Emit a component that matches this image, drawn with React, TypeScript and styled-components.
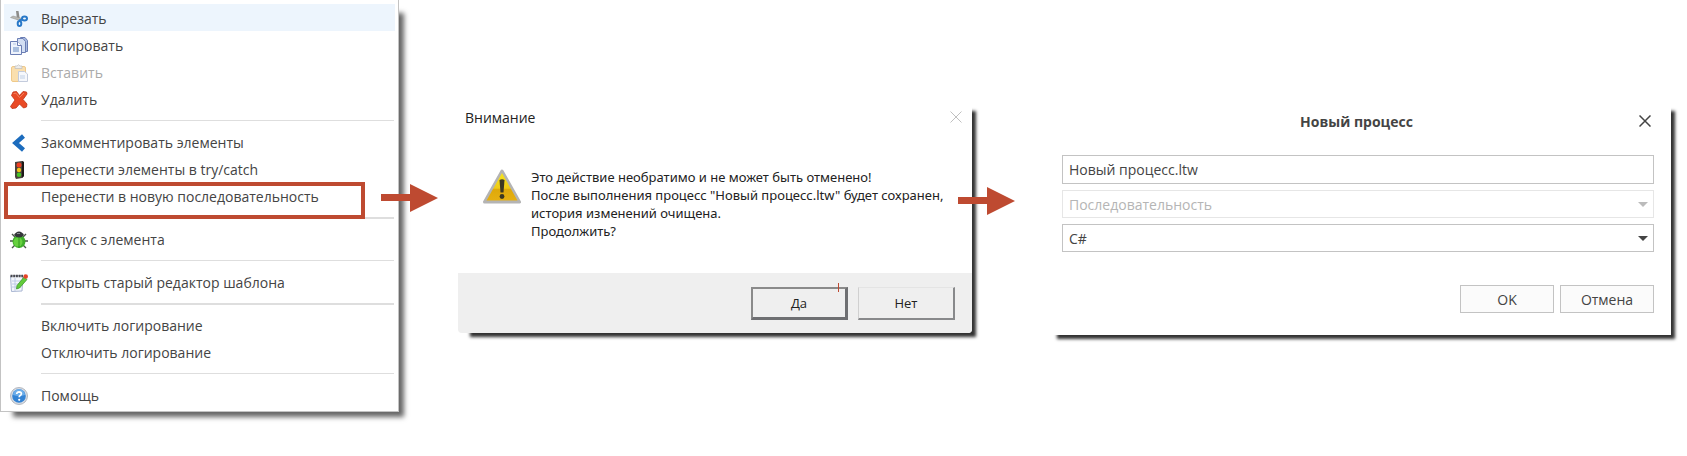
import React, { useState } from "react";
import styled, { createGlobalStyle, css } from "styled-components";

const RED = "#be4a31";

const GlobalStyle = createGlobalStyle`
  *, *::before, *::after { box-sizing: border-box; }
  body {
    margin: 0;
    background: #fff;
    color: #444;
    font-family: "Open Sans", "Noto Sans", sans-serif;
    font-size: 14px;
  }
  button, input, select { font: inherit; color: inherit; }
`;

const Page = styled.main`
  display: grid;
  grid-template-columns: minmax(0, 399fr) 59px minmax(0, 514fr) 73px minmax(0, 626fr);
  align-items: start;
  min-height: 100vh;
  padding: 0 16px 16px 0;
`;

/* ---------- context menu ---------- */

const Menu = styled.div`
  grid-column: 1;
  padding: 4px 3px 3px;
  background: #fff;
  border: solid #c3c3c3;
  border-width: 0 1px 1px;
  box-shadow: 9px 9px 5px -4px #666;
`;

const MenuRow = styled.div`
  position: relative;
`;

const MenuItem = styled.button<{ $active?: boolean }>`
  display: grid;
  grid-template-columns: 18px 1fr;
  align-items: center;
  column-gap: 13px;
  width: 100%;
  height: 27px;
  padding: 2px 6px 0;
  border: 0;
  background: ${(p) => (p.$active ? "#edf5fd" : "transparent")};
  text-align: left;
  white-space: nowrap;
  &:disabled { color: #aaa; }
`;

const ItemText = styled.span`
  grid-column: 2;
`;

const Separator = styled.hr<{ $thick?: boolean }>`
  height: ${(p) => (p.$thick ? "2px" : "1px")};
  margin: 8px 1px ${(p) => (p.$thick ? "6px" : "7px")} 37px;
  border: 0;
  background: #dedede;
`;

const Marker = styled.span`
  position: absolute;
  left: 0;
  right: 30px;
  top: 0;
  height: 37px;
  border: 4px solid ${RED};
  pointer-events: none;
`;

const ArrowSvg = styled.svg<{ $top: number; $right: number }>`
  position: absolute;
  z-index: 2;
  top: ${(p) => p.$top}px;
  right: ${(p) => p.$right}px;
  width: 57px;
  height: 28px;
  pointer-events: none;
`;

const Arrow = ({ top, right }: { top: number; right: number }) => (
  <ArrowSvg $top={top} $right={right} viewBox="0 0 57 28" aria-hidden="true">
    <path d="M0 10H29V0L57 14L29 28V17H0Z" fill={RED} />
  </ArrowSvg>
);

/* ---------- icons ---------- */

const Glyph = styled.svg`
  grid-column: 1;
  width: 18px;
  height: 18px;
`;

const Scissors = () => (
  <Glyph viewBox="0 0 18 18">
    <path d="M6 1L8.500 1L10 10.500L7 9.500Z" fill="#8c8c8a" />
    <path d="M0.500 7.500L3 6L11 8.200L10.500 10.800Z" fill="#b9b9b4" stroke="#8c8c8a" strokeWidth="0.500" />
    <g fill="none" stroke="#2878c8" strokeWidth="2">
      <ellipse cx="14.500" cy="8.500" rx="2.500" ry="2" />
      <ellipse cx="9.500" cy="13.500" rx="1.800" ry="2.500" />
      <path d="M9 10.500L12.500 9.500" />
    </g>
  </Glyph>
);

const Copy = () => (
  <Glyph viewBox="0 0 18 18">
    <g stroke="#6b7eb4">
      <path d="M10.500 0.500H15L17.500 3.500V14.500H10.500Z" fill="#a9bbe0" />
      <path d="M7.500 1.500H13L15.500 4.500V15.500H7.500Z" fill="#d2def3" />
      <path d="M0.500 4.500H7.500L11.500 8.500V17.500H0.500Z" fill="#eef3fc" />
      <path d="M7.500 4.500V8.500H11.500" fill="#fff" />
    </g>
    <path d="M3 10H9V15H3Z" fill="#a9bede" />
    <path d="M3 7H6" stroke="#b5c5e3" />
  </Glyph>
);

const Paste = () => (
  <Glyph viewBox="0 0 18 18">
    <rect x="1.500" y="2.500" width="14" height="15" rx="1.500" fill="#fadfae" stroke="#efc98a" />
    <path d="M5 4.500V2L7 2Q8.500 -0.500 10 2L12 2V4.500Z" fill="#ececec" stroke="#bdbdbd" strokeWidth="0.700" />
    <path d="M8.500 7.500H14.500L17.500 10V17.500H8.500Z" fill="#f6f8fc" stroke="#c3cbdc" />
    <path d="M10 11H15V15H10Z" fill="#dbe4f1" />
  </Glyph>
);

const Delete = () => (
  <Glyph viewBox="0 0 18 18">
    <path
      d="M3 1L6.500 0.500L9.500 4.500L13 0.500L16.500 1L17 3L13 8.500L17 13L16.500 16L13.500 17L9.500 13L6 17L2 17.500L0.500 15.500L5 9L1.500 4.500Z"
      fill="#e94a25"
      stroke="#bf3215"
      strokeWidth="0.800"
      strokeLinejoin="round"
    />
    <path d="M3.500 2.500L6 2.200L9.500 6.500L14 2" fill="none" stroke="#f2805f" />
  </Glyph>
);

const Chevron = () => (
  <Glyph viewBox="0 0 18 18">
    <path d="M13.500 2L5.500 9L13.500 16" fill="none" stroke="#1c6cbd" strokeWidth="4.500" />
  </Glyph>
);

const TrafficLight = () => (
  <Glyph viewBox="0 0 18 18">
    <path d="M5 1L12 0L14 1V15L12 17L6 18L5 16Z" fill="#49423d" />
    <path d="M12 0L14 1V15L12 17Z" fill="#1e1a18" />
    <circle cx="9" cy="4" r="2.500" fill="#ee3d22" />
    <circle cx="9" cy="9" r="2.200" fill="#f4c21b" />
    <circle cx="9" cy="13.800" r="2.300" fill="#46c425" />
  </Glyph>
);

const Bug = () => (
  <Glyph viewBox="0 0 18 18">
    <path d="M2 3L5 6M16 3L13 6M0 10H4M14 10H18M2 17L5 14M16 17L13 14" stroke="#4b5548" strokeWidth="1.400" />
    <ellipse cx="9" cy="10.500" rx="6.500" ry="6.500" fill="#3fae2a" />
    <ellipse cx="8" cy="11" rx="4.500" ry="4.500" fill="#67d13f" />
    <path d="M4 4Q6 0.500 9 0.500Q12 0.500 14 4Q12 6.500 9 6.500Q6 6.500 4 4Z" fill="#35373a" />
    <path d="M9 6.500V17" stroke="#278a1b" strokeWidth="0.800" />
    <path d="M7 2.500H10" stroke="#8b8e92" />
  </Glyph>
);

const Notepad = () => (
  <Glyph viewBox="0 0 18 18">
    <path d="M0.500 2L13 1.500L12 17L1.500 17.500Z" fill="#f4f7fc" stroke="#a9b6d2" />
    <path d="M0.500 2H13" stroke="#4a4a4e" strokeWidth="2.500" strokeDasharray="2 0.700" />
    <path d="M2 7H11M2 10H9M2 13H11M5 4V17" stroke="#b4c3e2" strokeWidth="0.800" />
    <path d="M14 3L17 5.500L9.500 14L6.500 15L7 11.500Z" fill="#62cb3b" stroke="#318f20" strokeWidth="0.700" />
    <circle cx="15.700" cy="2.500" r="2.300" fill="#e64527" />
  </Glyph>
);

const Help = () => (
  <Glyph viewBox="0 0 18 18">
    <circle cx="9" cy="9" r="8.500" fill="#d9dde4" stroke="#a3a8b1" strokeWidth="0.800" />
    <circle cx="9" cy="9" r="6.800" fill="#3383d4" />
    <path d="M3 8A6 6 0 0 1 15 8Q9 10 3 8Z" fill="#6caeea" />
    <path d="M6.700 7Q6.900 4.800 9.100 4.800Q11.400 4.900 11.400 6.800Q11.300 8 9.900 8.700Q9.200 9.100 9.200 10.300" fill="none" stroke="#fff" strokeWidth="1.700" />
    <circle cx="9.200" cy="12.800" r="1.100" fill="#fff" />
  </Glyph>
);

const WarningSvg = styled.svg`
  flex: none;
  width: 40px;
  height: 36px;
`;

const Warning = () => (
  <WarningSvg viewBox="0 0 40 36" role="img" aria-label="Предупреждение">
    <defs>
      <linearGradient id="amber" x1="0" y1="0" x2="0" y2="1">
        <stop offset="0" stopColor="#f6e51f" />
        <stop offset="0.550" stopColor="#efcb16" />
        <stop offset="0.600" stopColor="#dfa90a" />
        <stop offset="1" stopColor="#e6b012" />
      </linearGradient>
    </defs>
    <path d="M20 3L37.500 34H2.500Z" fill="#b4b4b4" stroke="#b4b4b4" strokeWidth="3" strokeLinejoin="round" />
    <path d="M20 5L35.500 32.500H4.500Z" fill="url(#amber)" />
    <path d="M17.500 12Q20 10.500 22.500 12L21.500 24.500H18.500Z" fill="#3c3822" />
    <circle cx="20" cy="28.500" r="2.400" fill="#3c3822" />
  </WarningSvg>
);

const CloseSvg = styled.svg`
  display: block;
  width: 12px;
  height: 12px;
`;

const Cross = ({ width }: { width: number }) => (
  <CloseSvg viewBox="0 0 12 12" aria-hidden="true">
    <path d="M0.500 0.500L11.500 11.500M11.500 0.500L0.500 11.500" stroke="currentColor" strokeWidth={width} />
  </CloseSvg>
);

const CloseButton = styled.button<{ $faint?: boolean }>`
  padding: 0;
  border: 0;
  background: none;
  color: ${(p) => (p.$faint ? "#c0c0c0" : "#444")};
`;

/* ---------- confirmation dialog ---------- */

const Confirm = styled.section`
  grid-column: 3;
  position: relative;
  margin-top: 99px;
  background: #fff;
  border-radius: 4px;
  color: #222;
  box-shadow: 8px 8px 3px -4px #333;
`;

const ConfirmHeader = styled.header`
  display: flex;
  align-items: center;
  justify-content: space-between;
  height: 36px;
  padding: 0 10px 0 7px;
`;

const ConfirmTitle = styled.h2`
  margin: 0;
  font-size: 14px;
  font-weight: 400;
`;

const ConfirmBody = styled.div`
  display: flex;
  gap: 9px;
  padding: 33px 24px 33px;
`;

const Message = styled.p`
  margin: 0;
  font-family: "Noto Sans", sans-serif;
  font-size: 13px;
  line-height: 18px;
  white-space: nowrap;
`;

const ConfirmFooter = styled.footer`
  display: flex;
  justify-content: flex-end;
  gap: 10px;
  padding: 14px 17px 13px;
  background: #efefef;
  border-radius: 0 0 4px 4px;
`;

const ClassicButton = styled.button<{ $default?: boolean }>`
  position: relative;
  width: 97px;
  height: 33px;
  padding: 0;
  background: #efefef;
  font-size: 13px;
  border-style: solid;
  ${(p) =>
    p.$default
      ? css`
          border-width: 2px 3px 3px 2px;
          border-color: #8a8a8a #6e6f72 #6e6f72 #8a8a8a;
        `
      : css`
          border-width: 1px 2px 2px 1px;
          border-color: #e4e4e4 #88898b #88898b #d0d0d0;
        `}
`;

const Tick = styled.span`
  position: absolute;
  right: 6px;
  top: -6px;
  width: 1px;
  height: 9px;
  background: ${RED};
`;

/* ---------- new process dialog ---------- */

const Process = styled.section`
  grid-column: 5;
  margin-top: 99px;
  padding: 11px 17px 22px;
  background: #fff;
  box-shadow: 8px 8px 3px -4px #333;
`;

const ProcessHeader = styled.header`
  display: grid;
  grid-template-columns: 12px 1fr 12px;
  align-items: center;
  height: 22px;
  margin: 0 3px 23px 0;
`;

const ProcessTitle = styled.h2`
  grid-column: 2;
  margin: 0;
  font-size: 14px;
  font-weight: 700;
  text-align: center;
`;

const Fields = styled.div`
  display: grid;
  gap: 6px;
`;

const fieldBox = css`
  display: block;
  width: 100%;
  height: 28px;
  padding: 0 6px;
  border: 1px solid #c3c3c3;
  border-radius: 0;
  background: #fff;
`;

const TextField = styled.input`
  ${fieldBox}
  height: 29px;
`;

const SelectWrap = styled.div<{ $disabled?: boolean }>`
  position: relative;
  &::after {
    content: "";
    position: absolute;
    right: 6px;
    top: 12px;
    border: solid transparent;
    border-width: 5px 5px 0;
    border-top-color: ${(p) => (p.$disabled ? "#bbb" : "#444")};
    pointer-events: none;
  }
`;

const Select = styled.select`
  ${fieldBox}
  appearance: none;
  &:disabled {
    color: #b5b5b5;
    border-color: #e6e6e6;
    opacity: 1;
  }
`;

const Actions = styled.footer`
  display: flex;
  justify-content: flex-end;
  gap: 6px;
  margin-top: 33px;
`;

const FlatButton = styled.button`
  width: 94px;
  height: 28px;
  padding: 0;
  border: 1px solid #c3c3c3;
  background: #fbfbfb;
`;

type Entry = {
  label?: string;
  icon?: React.ReactNode;
  active?: boolean;
  disabled?: boolean;
  marked?: boolean;
  separator?: "thin" | "thick";
};

const entries: Entry[] = [
  { label: "Вырезать", icon: <Scissors />, active: true },
  { label: "Копировать", icon: <Copy /> },
  { label: "Вставить", icon: <Paste />, disabled: true },
  { label: "Удалить", icon: <Delete /> },
  { separator: "thin" },
  { label: "Закомментировать элементы", icon: <Chevron /> },
  { label: "Перенести элементы в try/catch", icon: <TrafficLight /> },
  { label: "Перенести в новую последовательность", marked: true },
  { separator: "thick" },
  { label: "Запуск с элемента", icon: <Bug /> },
  { separator: "thin" },
  { label: "Открыть старый редактор шаблона", icon: <Notepad /> },
  { separator: "thick" },
  { label: "Включить логирование" },
  { label: "Отключить логирование" },
  { separator: "thin" },
  { label: "Помощь", icon: <Help /> },
];

export default function App() {
  const [name, setName] = useState("Новый процесс.ltw");

  return (
    <>
      <GlobalStyle />
      <Page>
        <Menu role="menu">
          {entries.map((e, i) =>
            e.separator ? (
              <Separator key={i} $thick={e.separator === "thick"} />
            ) : (
              <MenuRow key={i} role="none">
                <MenuItem type="button" role="menuitem" $active={e.active} disabled={e.disabled}>
                  {e.icon}
                  <ItemText>{e.label}</ItemText>
                </MenuItem>
                {e.marked && (
                  <>
                    <Marker />
                    <Arrow top={2} right={-43} />
                  </>
                )}
              </MenuRow>
            )
          )}
        </Menu>

        <Confirm role="dialog" aria-labelledby="confirm-title">
          <ConfirmHeader>
            <ConfirmTitle id="confirm-title">Внимание</ConfirmTitle>
            <CloseButton type="button" aria-label="Закрыть" $faint>
              <Cross width={1} />
            </CloseButton>
          </ConfirmHeader>
          <ConfirmBody>
            <Warning />
            <Message>
              Это действие необратимо и не может быть отменено!
              <br />
              После выполнения процесс "Новый процесс.ltw" будет сохранен,
              <br />
              история изменений очищена.
              <br />
              Продолжить?
            </Message>
          </ConfirmBody>
          <ConfirmFooter>
            <ClassicButton type="button" $default>
              Да
              <Tick />
            </ClassicButton>
            <ClassicButton type="button">Нет</ClassicButton>
          </ConfirmFooter>
          <Arrow top={88} right={-43} />
        </Confirm>

        <Process role="dialog" aria-labelledby="process-title">
          <ProcessHeader>
            <ProcessTitle id="process-title">Новый процесс</ProcessTitle>
            <CloseButton type="button" aria-label="Закрыть">
              <Cross width={1.5} />
            </CloseButton>
          </ProcessHeader>
          <Fields>
            <TextField aria-label="Имя процесса" value={name} onChange={(ev) => setName(ev.target.value)} />
            <SelectWrap $disabled>
              <Select aria-label="Тип процесса" disabled>
                <option>Последовательность</option>
              </Select>
            </SelectWrap>
            <SelectWrap>
              <Select aria-label="Язык">
                <option>C#</option>
              </Select>
            </SelectWrap>
          </Fields>
          <Actions>
            <FlatButton type="button">OK</FlatButton>
            <FlatButton type="button">Отмена</FlatButton>
          </Actions>
        </Process>
      </Page>
    </>
  );
}
